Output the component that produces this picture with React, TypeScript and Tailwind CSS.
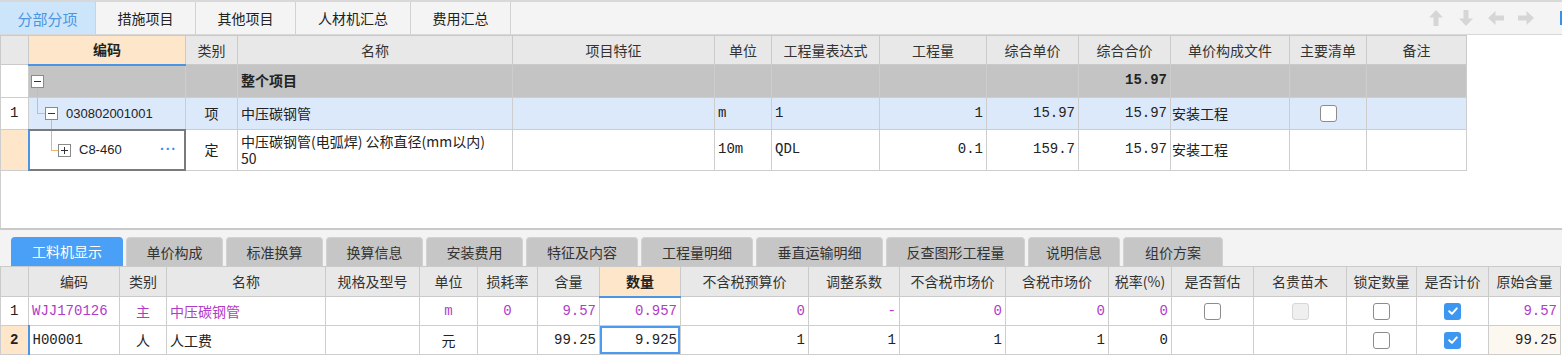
import React from 'react';

const purple = 'text-[#b03cc8]';
const mono = "font-['Liberation_Mono',monospace] text-[11.5px]";

const topCols = ['w-[28px]', 'w-[157px]', 'w-[52px]', 'w-[275px]', 'w-[202px]', 'w-[57px]', 'w-[108px]', 'w-[107px]', 'w-[92px]', 'w-[92px]', 'w-[119px]', 'w-[77px]', 'w-[100px]'];
const topHeads = ['', '编码', '类别', '名称', '项目特征', '单位', '工程量表达式', '工程量', '综合单价', '综合合价', '单价构成文件', '主要清单', '备注'];

const botCols = ['w-[28px]', 'w-[91px]', 'w-[47px]', 'w-[159px]', 'w-[94px]', 'w-[58px]', 'w-[60px]', 'w-[62px]', 'w-[81px]', 'w-[128px]', 'w-[91px]', 'w-[106px]', 'w-[103px]', 'w-[63px]', 'w-[82px]', 'w-[93px]', 'w-[70px]', 'w-[72px]', 'w-[72px]'];
const botHeads = ['', '编码', '类别', '名称', '规格及型号', '单位', '损耗率', '含量', '数量', '不含税预算价', '调整系数', '不含税市场价', '含税市场价', '税率(%)', '是否暂估', '名贵苗木', '锁定数量', '是否计价', '原始含量'];

const bottomTabs = [
  { label: '工料机显示', w: 'w-[112px]' },
  { label: '单价构成', w: 'w-[97px]' },
  { label: '标准换算', w: 'w-[97px]' },
  { label: '换算信息', w: 'w-[97px]' },
  { label: '安装费用', w: 'w-[97px]' },
  { label: '特征及内容', w: 'w-[112px]' },
  { label: '工程量明细', w: 'w-[112px]' },
  { label: '垂直运输明细', w: 'w-[127px]' },
  { label: '反查图形工程量', w: 'w-[139px]' },
  { label: '说明信息', w: 'w-[92px]' },
  { label: '组价方案', w: 'w-[100px]' },
];

const td = 'border border-[#cdcdcd] px-[3px] text-[14px] text-[#222] whitespace-nowrap overflow-hidden';
const th = 'border border-[#cacaca] text-[14px] text-center whitespace-nowrap';
const thPlain = 'bg-[#e8e8e8] text-[#333] font-normal';
const thActive = 'bg-[#fde6c9] font-bold border-b-2 border-b-[#4a95e6] text-[#222]';

const TreeBox = ({ plus }: { plus?: boolean }) => (
  <span className="absolute flex h-[13px] w-[13px] items-center justify-center border border-[#8a8a8a] bg-white">
    <span className="h-px w-[7px] bg-[#333]" />
    {plus && <span className="absolute h-[7px] w-px bg-[#333]" />}
  </span>
);

const CheckBox = ({ checked, disabled }: { checked?: boolean; disabled?: boolean }) => {
  if (checked) {
    return (
      <span className="mx-auto flex h-[17px] w-[17px] items-center justify-center rounded-[3px] bg-[#3d96ef]">
        <svg width="12" height="12" viewBox="0 0 12 12">
          <path d="M2.2 6.2 L4.9 8.8 L9.8 3.4" fill="none" stroke="white" strokeWidth="2" strokeLinecap="round" strokeLinejoin="round" />
        </svg>
      </span>
    );
  }
  return (
    <span className={`mx-auto block h-[17px] w-[17px] rounded-[3px] border ${disabled ? 'border-[#d6d6d6] bg-[#efefef]' : 'border-[#8c8c8c] bg-white'}`} />
  );
};

const Arrow = ({ rot }: { rot: string }) => (
  <svg width="16" height="18" viewBox="0 0 16 18" className={rot}>
    <path d="M8 1 L15 8.5 L10.5 8.5 L10.5 17 L5.5 17 L5.5 8.5 L1 8.5 Z" fill="#d6d6d6" />
  </svg>
);

export default function App() {
  return (
    <div className="w-[1562px] h-[355px] overflow-hidden bg-white font-['Noto_Sans_CJK_SC',sans-serif] leading-[17px]">
      {/* top section */}
      <div className="flex h-[228px] flex-col">
        <div className="flex h-[35px] items-stretch border-t-2 border-b border-[#d8d8d8] bg-[#f4f4f4]">
          <div className="flex w-[96px] items-center justify-center border-r border-[#d2d2d2] bg-[#cde5fa] text-[15px] text-[#4b96e4]">分部分项</div>
          <div className="flex w-[100px] items-center justify-center border-r border-[#d2d2d2] text-[14px] text-[#222]">措施项目</div>
          <div className="flex w-[100px] items-center justify-center border-r border-[#d2d2d2] text-[14px] text-[#222]">其他项目</div>
          <div className="flex w-[115px] items-center justify-center border-r border-[#d2d2d2] text-[14px] text-[#222]">人材机汇总</div>
          <div className="flex w-[100px] items-center justify-center border-r border-[#d2d2d2] text-[14px] text-[#222]">费用汇总</div>
          <div className="ml-auto flex items-center gap-[14px] pr-[26px]">
            <Arrow rot="" />
            <Arrow rot="rotate-180" />
            <Arrow rot="-rotate-90" />
            <Arrow rot="rotate-90" />
          </div>
          <div className="my-[9px] w-[2px] bg-[#3d8fe6]" />
        </div>

        <div className="flex-1 border-l border-[#cfcfcf]">
          <table className="-ml-px w-[1466px] table-fixed border-collapse">
            <colgroup>
              {topCols.map((c, i) => (
                <col key={i} className={c} />
              ))}
            </colgroup>
            <thead>
              <tr className="h-[29px]">
                {topHeads.map((h, i) => (
                  <th key={i} className={`${th} ${i === 1 ? thActive : thPlain}`}>
                    {h}
                  </th>
                ))}
              </tr>
            </thead>
            <tbody>
              {/* row 0 */}
              <tr className="h-[32px] bg-[#c4c4c4]">
                <td className={`${td} bg-white`} />
                <td className="border border-[#cdcdcd] p-0">
                  <div className="relative h-[31px]">
                    <span className="absolute left-[2px] top-[9px]">
                      <TreeBox />
                    </span>
                    <span className="absolute left-[8px] top-[22px] bottom-0 w-px bg-[#f2b36b]" />
                  </div>
                </td>
                <td className={td} />
                <td className={`${td} font-bold`}>整个项目</td>
                <td className={td} />
                <td className={td} />
                <td className={td} />
                <td className={td} />
                <td className={td} />
                <td className={`${td} text-right ${mono} font-bold`}>15.97</td>
                <td className={td} />
                <td className={td} />
                <td className={td} />
              </tr>
              {/* row 1 */}
              <tr className="h-[32px] bg-[#dce9fb]">
                <td className={`${td} bg-white ${mono} text-[13px] pl-[9px]`}>1</td>
                <td className="border border-[#cdcdcd] p-0">
                  <div className="relative flex h-[31px] items-center pl-[37px] font-['Liberation_Sans',sans-serif] text-[13px] text-[#222]">
                    <span className="absolute left-[8px] top-0 h-[16px] w-px bg-[#f2b36b]" />
                    <span className="absolute left-[8px] top-[15px] h-px w-[8px] bg-[#f2b36b]" />
                    <span className="absolute left-[16px] top-[9px]">
                      <TreeBox />
                    </span>
                    <span className="absolute left-[22px] top-[22px] bottom-0 w-px bg-[#f2b36b]" />
                    030802001001
                  </div>
                </td>
                <td className={`${td} text-center`}>项</td>
                <td className={td}>中压碳钢管</td>
                <td className={td} />
                <td className={`${td} ${mono} text-[11px]`}>m</td>
                <td className={`${td} ${mono}`}>1</td>
                <td className={`${td} text-right ${mono}`}>1</td>
                <td className={`${td} text-right ${mono}`}>15.97</td>
                <td className={`${td} text-right ${mono}`}>15.97</td>
                <td className={`${td} px-px`}>安装工程</td>
                <td className={td}>
                  <span className="mx-auto block h-[17px] w-[17px] rounded-[3px] border border-[#8c8c8c] bg-white" />
                </td>
                <td className={td} />
              </tr>
              {/* row 2 */}
              <tr className="h-[41px] bg-white">
                <td className={`${td} bg-[#fde6c9]`} />
                <td className="border border-[#cdcdcd] p-0">
                  <div className="relative flex h-[40px] items-center pl-[50px] pr-[8px] font-['Liberation_Sans',sans-serif] text-[13px] text-[#222]">
                    <span className="absolute left-[22px] top-0 h-[21px] w-px bg-[#f2b36b]" />
                    <span className="absolute left-[22px] top-[20px] h-px w-[7px] bg-[#f2b36b]" />
                    <span className="absolute left-[29px] top-[14px]">
                      <TreeBox plus />
                    </span>
                    <span>C8-460</span>
                    <span className="ml-auto text-[14px] font-bold tracking-[1px] text-[#3a8ee6]">···</span>
                    <span className="pointer-events-none absolute inset-[-1px] border-2 border-[#7a7a7a] border-l-[#4a95e6]" />
                  </div>
                </td>
                <td className={`${td} text-center`}>定</td>
                <td className={`${td} whitespace-normal leading-[17px]`}>
                  中压碳钢管(电弧焊) 公称直径(mm以内)
                  <br />
                  50
                </td>
                <td className={td} />
                <td className={`${td} ${mono}`}>10m</td>
                <td className={`${td} ${mono}`}>QDL</td>
                <td className={`${td} text-right ${mono}`}>0.1</td>
                <td className={`${td} text-right ${mono}`}>159.7</td>
                <td className={`${td} text-right ${mono}`}>15.97</td>
                <td className={`${td} px-px`}>安装工程</td>
                <td className={td} />
                <td className={td} />
              </tr>
            </tbody>
          </table>
        </div>
      </div>

      {/* bottom section */}
      <div className="flex h-[38px] items-end gap-[3px] border-t-2 border-[#c9c9c9] bg-[#f3f3f3] pl-[11px]">
        {bottomTabs.map((t, i) => (
          <div
            key={t.label}
            className={`${t.w} flex h-[29px] items-center justify-center rounded-t-[4px] text-[14px] ${
              i === 0 ? 'bg-[#4a9ff6] text-white' : 'border border-b-0 border-[#d2d2d2] bg-[#c6c6c6] text-[#333]'
            }`}
          >
            {t.label}
          </div>
        ))}
      </div>

      <table className="w-[1560px] table-fixed border-collapse">
        <colgroup>
          {botCols.map((c, i) => (
            <col key={i} className={c} />
          ))}
        </colgroup>
        <thead>
          <tr className="h-[30px]">
            {botHeads.map((h, i) => (
              <th key={i} className={`${th} ${i === 8 ? thActive : thPlain}`}>
                {h}
              </th>
            ))}
          </tr>
        </thead>
        <tbody>
          <tr className="h-[29px]">
            <td className={`${td} ${mono} text-[13px] pl-[9px]`}>1</td>
            <td className={`${td} ${mono} ${purple}`}>WJJ170126</td>
            <td className={`${td} text-center ${purple}`}>主</td>
            <td className={`${td} ${purple}`}>中压碳钢管</td>
            <td className={td} />
            <td className={`${td} text-center ${mono} text-[11px] ${purple}`}>m</td>
            <td className={`${td} text-center ${mono} ${purple}`}>0</td>
            <td className={`${td} text-right ${mono} ${purple}`}>9.57</td>
            <td className={`${td} text-right ${mono} ${purple}`}>0.957</td>
            <td className={`${td} text-right ${mono} ${purple}`}>0</td>
            <td className={`${td} text-right ${mono} ${purple}`}>-</td>
            <td className={`${td} text-right ${mono} ${purple}`}>0</td>
            <td className={`${td} text-right ${mono} ${purple}`}>0</td>
            <td className={`${td} text-right ${mono} ${purple}`}>0</td>
            <td className={td}>
              <CheckBox />
            </td>
            <td className={td}>
              <CheckBox disabled />
            </td>
            <td className={td}>
              <CheckBox />
            </td>
            <td className={td}>
              <CheckBox checked />
            </td>
            <td className={`${td} text-right ${mono} ${purple}`}>9.57</td>
          </tr>
          <tr className="h-[29px]">
            <td className={`${td} bg-[#fde6c9] ${mono} text-[13px] font-bold pl-[9px]`}>2</td>
            <td className={`${td} ${mono} border-l-2 border-l-[#4a95e6]`}>H00001</td>
            <td className={`${td} text-center`}>人</td>
            <td className={td}>人工费</td>
            <td className={td} />
            <td className={`${td} text-center`}>元</td>
            <td className={td} />
            <td className={`${td} text-right ${mono}`}>99.25</td>
            <td className={`${td} relative text-right ${mono}`}>
              9.925
              <span className="pointer-events-none absolute inset-0 border-2 border-[#4b9cf0]" />
            </td>
            <td className={`${td} text-right ${mono}`}>1</td>
            <td className={`${td} text-right ${mono}`}>1</td>
            <td className={`${td} text-right ${mono}`}>1</td>
            <td className={`${td} text-right ${mono}`}>1</td>
            <td className={`${td} text-right ${mono}`}>0</td>
            <td className={td} />
            <td className={td} />
            <td className={td}>
              <CheckBox />
            </td>
            <td className={td}>
              <CheckBox checked />
            </td>
            <td className={`${td} text-right ${mono} bg-[#fdf8ef]`}>99.25</td>
          </tr>
        </tbody>
      </table>
    </div>
  );
}
